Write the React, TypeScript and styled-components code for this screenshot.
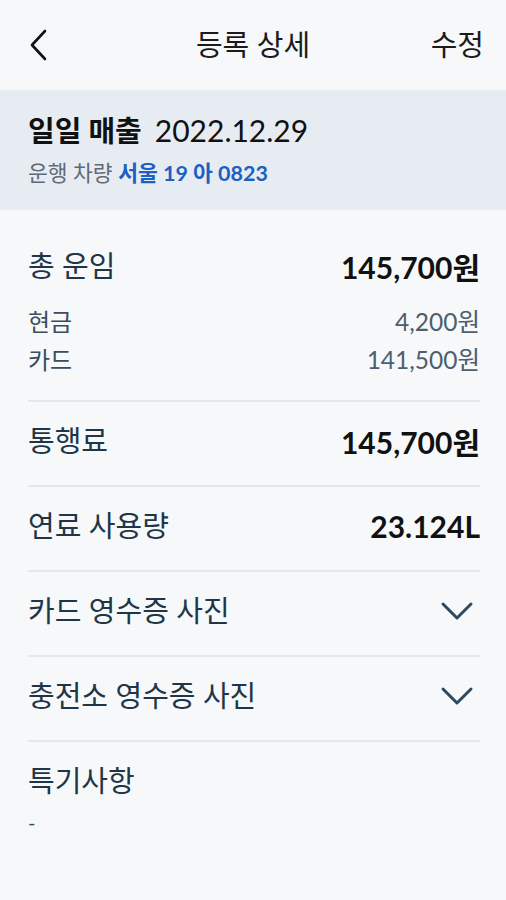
import React from "react";
import styled, { createGlobalStyle } from "styled-components";

const GlobalStyle = createGlobalStyle`
    body {
        margin: 0;
        background: #f6f8f9;
        font-family: Lato, "Noto Sans CJK KR", sans-serif;
    }
`;

const Page = styled.div`
    width: 506px;
    min-height: 900px;
    background: #f6f8f9;
`;

const Header = styled.header`
    height: 90px;
    display: flex;
    align-items: center;
    justify-content: space-between;
    padding: 0 22px 0 28px;
    position: relative;
    box-sizing: border-box;
`;

const BackButton = styled.button`
    border: none;
    background: none;
    padding: 0;
    width: 24px;
    height: 36px;
    display: flex;
    align-items: center;
`;

const Title = styled.h1`
    position: absolute;
    left: 0;
    right: 0;
    text-align: center;
    margin: 0;
    font-size: 29px;
    line-height: 36px;
    font-weight: 400;
    color: #1b1b1b;
    pointer-events: none;
`;

const EditButton = styled.button`
    border: none;
    background: none;
    padding: 0;
    font-family: inherit;
    font-size: 29px;
    line-height: 36px;
    color: #1b1b1b;
`;

const Summary = styled.section`
    background: #e6ecf2;
    height: 120px;
    padding: 22px 28px 0;
    box-sizing: border-box;
`;

const SummaryTitle = styled.div`
    display: flex;
    align-items: baseline;
    gap: 13px;
    font-size: 29px;
    line-height: 36px;
    color: #111;
    b {
        font-weight: 700;
    }
    span {
        font-size: 30px;
    }
`;

const Vehicle = styled.div`
    margin-top: 11px;
    font-size: 21.5px;
    line-height: 26px;
    color: #5e6a76;
    span {
        color: #1d5fc2;
        font-weight: 700;
    }
`;

const Content = styled.div`
    padding: 0 26px 0 28px;
`;

const Block = styled.div<{ $pad?: string }>`
    padding: ${(p) => p.$pad || "21px 0 26px"};
    border-bottom: 2px solid #e4e8eb;
    &:last-child {
        border-bottom: none;
    }
`;

const Row = styled.div`
    display: flex;
    align-items: center;
    justify-content: space-between;
    height: 36px;
`;

const Label = styled.div`
    font-size: 29px;
    line-height: 36px;
    color: #1f3548;
`;

const Value = styled.div`
    font-size: 30px;
    font-weight: 700;
    color: #111;
`;

const SubRow = styled.div`
    display: flex;
    align-items: center;
    justify-content: space-between;
    height: 30px;
    margin-top: 21px;
    & + & {
        margin-top: 8px;
    }
`;

const SubLabel = styled.div`
    font-size: 24px;
    color: #3a4e60;
`;

const SubValue = styled.div`
    font-size: 24.5px;
    color: #4d5e6e;
`;

const Note = styled.div`
    margin-top: 11px;
    font-size: 20px;
    line-height: 24px;
    color: #3a4e60;
`;

const ChevronWrap = styled.div`
    display: flex;
    margin-right: 6px;
`;

const Chevron = () => (
    <ChevronWrap>
        <svg width="34" height="22" viewBox="0 0 34 22" fill="none">
            <path d="M3 4 L17 18 L31 4" stroke="#2e4a60" strokeWidth="3" strokeLinecap="round" strokeLinejoin="round" />
        </svg>
    </ChevronWrap>
);

const BackIcon = () => (
    <svg width="20" height="32" viewBox="0 0 20 32" fill="none">
        <path d="M17 2 L4 16 L17 30" stroke="#111" strokeWidth="2.6" strokeLinecap="round" strokeLinejoin="round" />
    </svg>
);

export default function App() {
    return (
        <Page>
            <GlobalStyle />
            <Header>
                <BackButton>
                    <BackIcon />
                </BackButton>
                <Title>등록 상세</Title>
                <EditButton>수정</EditButton>
            </Header>
            <Summary>
                <SummaryTitle>
                    <b>일일 매출</b>
                    <span>2022.12.29</span>
                </SummaryTitle>
                <Vehicle>
                    운행 차량 <span>서울 19 아 0823</span>
                </Vehicle>
            </Summary>
            <Content>
                <Block $pad="38px 0 27px">
                    <Row>
                        <Label>총 운임</Label>
                        <Value>145,700원</Value>
                    </Row>
                    <SubRow>
                        <SubLabel>현금</SubLabel>
                        <SubValue>4,200원</SubValue>
                    </SubRow>
                    <SubRow>
                        <SubLabel>카드</SubLabel>
                        <SubValue>141,500원</SubValue>
                    </SubRow>
                </Block>
                <Block>
                    <Row>
                        <Label>통행료</Label>
                        <Value>145,700원</Value>
                    </Row>
                </Block>
                <Block>
                    <Row>
                        <Label>연료 사용량</Label>
                        <Value>23.124L</Value>
                    </Row>
                </Block>
                <Block>
                    <Row>
                        <Label>카드 영수증 사진</Label>
                        <Chevron />
                    </Row>
                </Block>
                <Block>
                    <Row>
                        <Label>충전소 영수증 사진</Label>
                        <Chevron />
                    </Row>
                </Block>
                <Block>
                    <Label>특기사항</Label>
                    <Note>-</Note>
                </Block>
            </Content>
        </Page>
    );
}
